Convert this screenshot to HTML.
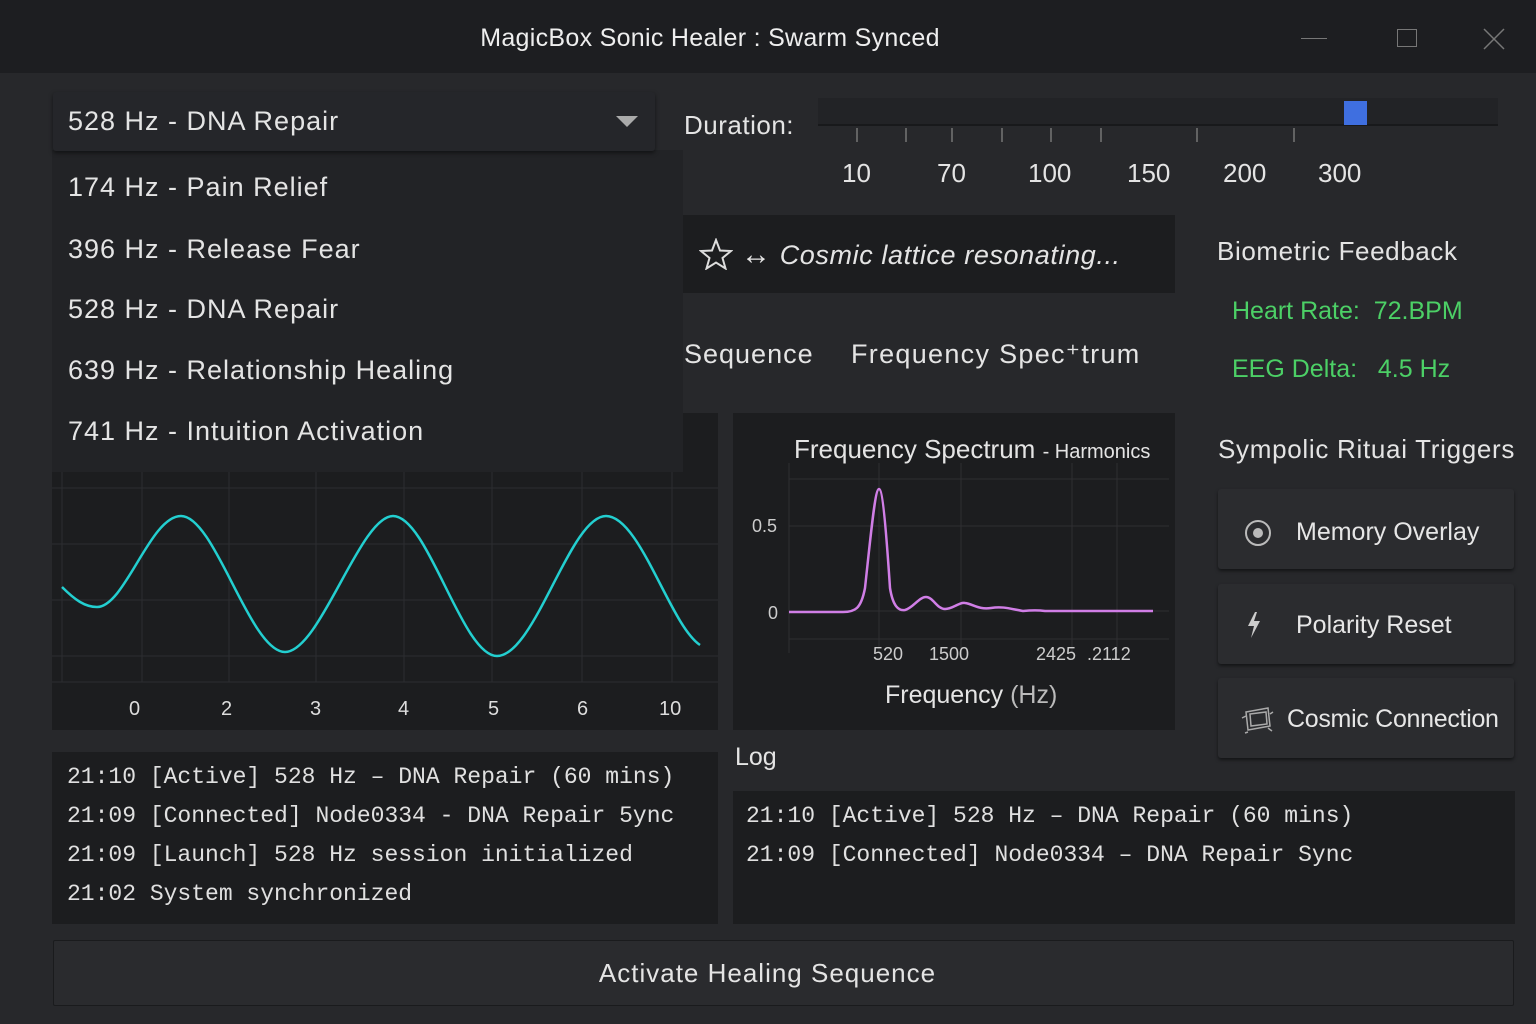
<!DOCTYPE html>
<html><head><meta charset="utf-8"><style>
*{margin:0;padding:0;box-sizing:border-box}
body{width:1536px;height:1024px;background:#27282b;color:#e4e4e4;font-family:"Liberation Sans",sans-serif;position:relative;overflow:hidden}
.a{position:absolute;white-space:nowrap}
.mono{font-family:"Liberation Mono",monospace;font-size:23px;line-height:39px;color:#e0e0e0}
.btn{position:absolute;left:1218px;width:296px;height:80px;background:#2b2c2f;border-radius:3px;box-shadow:0 2px 3px rgba(0,0,0,.5);font-size:25px;color:#e6e6e6}
.l{letter-spacing:1px}
</style></head><body>
<div class="a" style="left:0;top:0;width:1536px;height:73px;background:#1d1e21"></div>
<div class="a" style="left:0;top:24px;width:1420px;text-align:center;font-size:25px;color:#eee;letter-spacing:0.3px">MagicBox Sonic Healer : Swarm Synced</div>
<div class="a" style="left:1301px;top:38px;width:26px;height:1px;background:#777"></div>
<div class="a" style="left:1397px;top:29px;width:20px;height:18px;border:1px solid #777"></div>
<svg class="a" style="left:1482px;top:28px" width="24" height="22"><path d="M2 1L22 21M22 1L2 21" stroke="#777" stroke-width="1.5"/></svg>

<div class="a" style="left:52px;top:150px;width:631px;height:322px;background:#222326"></div>
<div class="a" style="left:53px;top:92px;width:602px;height:59px;background:#25262a;border-radius:3px;box-shadow:0 2px 4px rgba(0,0,0,.5)"></div>
<div class="a l" style="left:68px;top:106px;font-size:27px">528 Hz - DNA Repair</div>
<svg class="a" style="left:616px;top:116px" width="22" height="12"><path d="M0 0H22L11 11Z" fill="#aaa"/></svg>
<div class="a l" style="left:68px;top:172px;font-size:27px">174 Hz - Pain Relief</div>
<div class="a l" style="left:68px;top:234px;font-size:27px">396 Hz - Release Fear</div>
<div class="a l" style="left:68px;top:294px;font-size:27px">528 Hz - DNA Repair</div>
<div class="a l" style="left:68px;top:355px;font-size:27px">639 Hz - Relationship Healing</div>
<div class="a l" style="left:68px;top:416px;font-size:27px">741 Hz - Intuition Activation</div>
<div class="a" style="left:683px;top:413px;width:35px;height:60px;background:#1c1d1f"></div>

<div class="a" style="left:52px;top:472px;width:666px;height:258px;background:#1c1d1f"></div>
<svg class="a" style="left:52px;top:472px" width="666" height="258">
<g stroke="#2c2d30" stroke-width="1">
<path d="M0 16H666M0 72H666M0 128H666M0 184H666M0 210H666M10 0V210M90 0V210M177 0V210M264 0V210M352 0V210M440 0V210M530 0V210M620 0V210"/></g>
<path d="M10 115 C23 128 33 135 45 135 C73 135 98 44 129 44 C163 44 198 180 233 180 C268 180 308 44 341 44 C376 44 410 184 445 184 C483 184 518 44 554 44 C588 44 618 153 648 173" fill="none" stroke="#23cfd0" stroke-width="2.5"/>
</svg>
<div class="a" style="left:52px;top:698px;width:666px;font-size:20px;color:#ddd">
<span class="a" style="left:77px">0</span><span class="a" style="left:169px">2</span><span class="a" style="left:258px">3</span><span class="a" style="left:346px">4</span><span class="a" style="left:436px">5</span><span class="a" style="left:525px">6</span><span class="a" style="left:607px">10</span></div>

<div class="a" style="left:684px;top:110px;font-size:26px;letter-spacing:0.5px">Duration:</div>
<div class="a" style="left:818px;top:98px;width:680px;height:28px;background:#222326;border-bottom:2px solid #18191b"></div>
<div class="a" style="left:1344px;top:101px;width:23px;height:24px;background:#3f6fe0"></div>
<svg class="a" style="left:818px;top:128px" width="500" height="16"><g stroke="#888" stroke-width="1.2"><path d="M39 0V14M88 0V14M134 0V14M184 0V14M233 0V14M283 0V14M379 0V14M476 0V14"/></g></svg>
<div class="a" style="left:842px;top:158px;font-size:26px">10</div>
<div class="a" style="left:937px;top:158px;font-size:26px">70</div>
<div class="a" style="left:1028px;top:158px;font-size:26px">100</div>
<div class="a" style="left:1127px;top:158px;font-size:26px">150</div>
<div class="a" style="left:1223px;top:158px;font-size:26px">200</div>
<div class="a" style="left:1318px;top:158px;font-size:26px">300</div>

<div class="a" style="left:683px;top:215px;width:492px;height:78px;background:#1c1d1f"></div>
<svg class="a" style="left:699px;top:238px" width="34" height="32"><path d="M17 2L21 12.5L32 13L23.5 20L26.5 30.5L17 24.5L7.5 30.5L10.5 20L2 13L13 12.5Z" fill="none" stroke="#ddd" stroke-width="2"/></svg>
<div class="a" style="left:741px;top:238px;font-size:27px;font-style:italic;letter-spacing:0.6px"><span style="font-size:30px;font-style:normal">↔</span> Cosmic lattice resonating...</div>
<div class="a" style="left:1217px;top:236px;font-size:26px;letter-spacing:0.6px">Biometric Feedback</div>
<div class="a" style="left:1232px;top:297px;font-size:25px;color:#4cd066">Heart Rate:&nbsp; 72.BPM</div>
<div class="a" style="left:1232px;top:355px;font-size:25px;color:#4cd066">EEG Delta:&nbsp;&nbsp; 4.5 Hz</div>
<div class="a l" style="left:684px;top:339px;font-size:27px">Sequence</div>
<div class="a" style="left:851px;top:339px;font-size:27px;letter-spacing:1.3px">Frequency Spec⁺trum</div>

<div class="a" style="left:733px;top:413px;width:442px;height:317px;background:#1c1d1f"></div>
<svg class="a" style="left:733px;top:413px" width="442" height="317">
<g stroke="#2e2f32"><path d="M56 66H436M56 113H436M56 198H436M56 226H436M56 50V240M146 50V240M228 50V240M339 50V240M384 50V240"/></g>
<path d="M56 199 H110 C122 199 128 196 132 175 C138 120 142 76 146 76 C150 76 154 130 157 175 C160 194 166 198 172 197 C180 195 186 184 193 184 C200 184 204 196 212 196 C220 196 226 189 232 190 C240 191 246 197 258 195 C270 193 278 196 290 198 C300 197 305 197 312 198 H420" fill="none" stroke="#d07ee6" stroke-width="2.5"/>
</svg>
<div class="a" style="left:794px;top:434px;font-size:26px">Frequency Spectrum <span style="font-size:20px">- Harmonics</span></div>
<div class="a" style="left:752px;top:516px;font-size:18px;color:#ccc">0.5</div>
<div class="a" style="left:768px;top:603px;font-size:18px;color:#ccc">0</div>
<div class="a" style="left:873px;top:644px;font-size:18px;color:#ccc">520</div>
<div class="a" style="left:929px;top:644px;font-size:18px;color:#ccc">1500</div>
<div class="a" style="left:1036px;top:644px;font-size:18px;color:#ccc">2425</div>
<div class="a" style="left:1087px;top:644px;font-size:18px;color:#ccc">.2112</div>
<div class="a" style="left:885px;top:681px;font-size:25px">Frequency <span style="color:#bbb">(Hz)</span></div>

<div class="a" style="left:1218px;top:434px;font-size:26px;letter-spacing:0.7px">Sympolic Rituai Triggers</div>
<div class="btn" style="top:489px"><svg class="a" style="left:25px;top:29px" width="30" height="30"><circle cx="15" cy="15" r="12" fill="none" stroke="#bbb" stroke-width="2"/><circle cx="15" cy="15" r="5" fill="#bbb"/></svg><span class="a" style="left:78px;top:29px">Memory Overlay</span></div>
<div class="btn" style="top:584px"><svg class="a" style="left:27px;top:26px" width="20" height="30"><path d="M10 2L3 16H9L6 28L15 11H9L12 2Z" fill="#ccc"/></svg><span class="a" style="left:78px;top:27px">Polarity Reset</span></div>
<div class="btn" style="top:678px"><svg class="a" style="left:22px;top:26px" width="34" height="30"><g fill="none" stroke="#aaa" stroke-width="1.5"><path d="M6 8L28 4L30 22L8 26Z"/><path d="M10 10L26 8L27 20L11 22Z"/><path d="M2 14L6 12M30 10L33 8M8 28L5 29M28 24L32 27"/></g></svg><span class="a" style="left:69px;top:27px;letter-spacing:-0.3px">Cosmic Connection</span></div>

<div class="a" style="left:52px;top:752px;width:666px;height:172px;background:#1c1d1f"></div>
<div class="a mono" style="left:67px;top:758px">21:10 [Active] 528 Hz – DNA Repair (60 mins)<br>21:09 [Connected] Node0334 - DNA Repair 5ync<br>21:09 [Launch] 528 Hz session initialized<br>21:02 System synchronized</div>
<div class="a" style="left:735px;top:743px;font-size:25px">Log</div>
<div class="a" style="left:733px;top:791px;width:782px;height:133px;background:#1c1d1f"></div>
<div class="a mono" style="left:746px;top:797px">21:10 [Active] 528 Hz – DNA Repair (60 mins)<br>21:09 [Connected] Node0334 – DNA Repair Sync</div>

<div class="a" style="left:53px;top:940px;width:1461px;height:66px;background:#2a2b2e;border:1px solid #1a1b1d;border-radius:2px"></div>
<div class="a l" style="left:53px;top:958px;width:1429px;text-align:center;font-size:26px">Activate Healing Sequence</div>
</body></html>
